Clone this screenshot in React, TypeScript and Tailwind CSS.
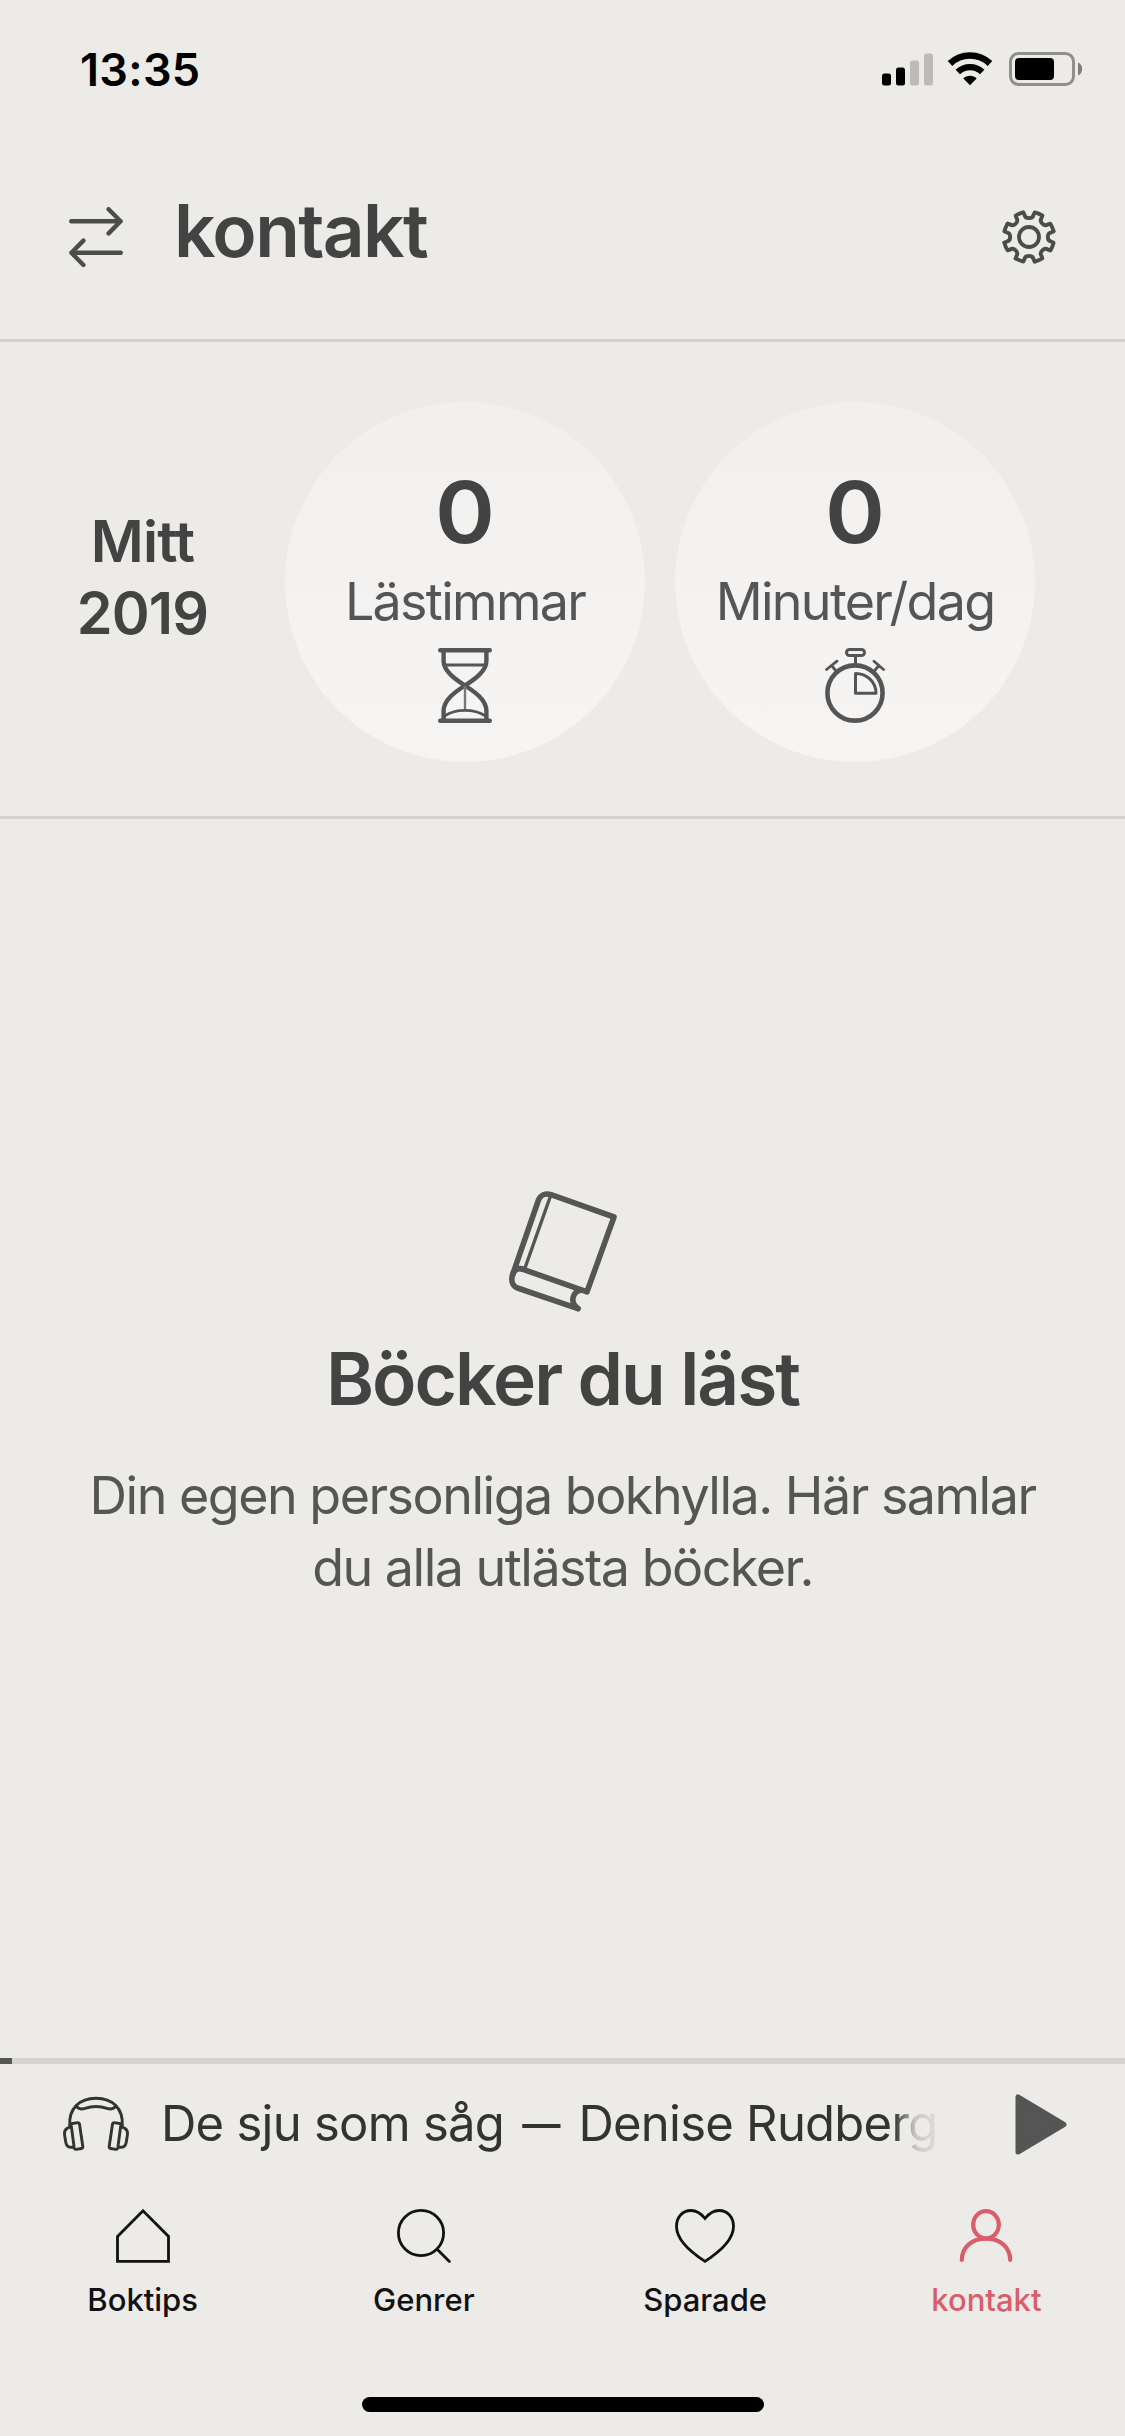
import type { ReactNode } from "react"
import clsx from "clsx"

function StatusBar() {
  return (
    <div className="flex h-[138px] items-center justify-between pl-[80px] pr-[42px]">
      <span className="text-[45px] leading-none font-semibold tracking-[0.3px] text-black">13:35</span>
      <div className="flex items-center">
        <svg width="51" height="33" viewBox="0 0 51 33" className="mr-[14px]">
          <rect x="0" y="20.5" width="9" height="12" rx="2.5" />
          <rect x="14" y="14.5" width="9" height="18" rx="2.5" />
          <rect x="28" y="7.5" width="9" height="25" rx="2.5" fill="#bcbbb9" />
          <rect x="42" y="0.5" width="9" height="32" rx="2.5" fill="#bcbbb9" />
        </svg>
        <svg width="46" height="34" viewBox="0 0 46 34" className="mr-[16px]">
          <path d="M3 11.5a29 29 0 0 1 40 0" fill="none" stroke="#000" strokeWidth="6.6" />
          <path d="M10.8 20a17.8 17.8 0 0 1 24.4 0" fill="none" stroke="#000" strokeWidth="6.4" />
          <path d="M16.3 26.5C19.5 22.8 26.5 22.8 29.7 26.5L23 33.2Z" />
        </svg>
        <svg width="74" height="34" viewBox="0 0 74 34">
          <rect x="1.5" y="1.5" width="63" height="31" rx="8" fill="none" stroke="#908f8d" strokeWidth="3" />
          <rect x="6" y="6" width="39" height="22" rx="4" />
          <path d="M69 10.5c5.5 2 5.5 11 0 13z" fill="#807f7d" />
        </svg>
      </div>
    </div>
  )
}

function SwapIcon() {
  return (
    <svg width="54" height="60" viewBox="0 0 54 60" fill="none" stroke="#4c4c4c" strokeWidth="4.4" strokeLinecap="round" strokeLinejoin="round">
      <path d="M2.2 14.2H51.6M39.6 2.2L51.6 14.2L39.6 26.4" />
      <path d="M51.8 45.8H2.4M14.4 33.6L2.4 45.8L14.4 58" />
    </svg>
  )
}

function GearIcon() {
  return (
    <svg width="54" height="54" viewBox="-27 -27 54 54" fill="none" stroke="#4c4c4c" strokeWidth="3.8" strokeLinejoin="round">
      <circle r="10" />
      {[0, 45, 90, 135, 180, 225, 270, 315].map((angle) => (
        <path
          key={angle}
          transform={`rotate(${angle})`}
          strokeLinecap="round"
          d="M-5.7 -24.6L-4.6 -22.4C-4.2 -20 -2.4 -18.8 0 -18.8C2.4 -18.8 4.2 -20 4.6 -22.4L5.7 -24.6A25.2 25.2 0 0 1 13.36 -21.42"
        />
      ))}
    </svg>
  )
}

function HourglassIcon() {
  return (
    <svg width="54" height="75" viewBox="0 0 54 75" fill="none" stroke="#555" strokeWidth="4.4">
      <path d="M2.2 2.2H51.8M2.2 72.8H51.8" strokeLinecap="round" />
      <path d="M5.6 3V13C5.6 23 17 31 27 37.5C37 44 48.4 52 48.4 63V72" />
      <path d="M48.4 3V13C48.4 23 37 31 27 37.5C17 44 5.6 52 5.6 63V72" />
      <path d="M7 17H47" strokeWidth="2.8" />
      <path d="M27 38V62" strokeWidth="2.4" stroke="#777" />
      <path d="M6.5 68C18 60.5 36 60.5 47.5 68" strokeWidth="2.8" />
    </svg>
  )
}

function StopwatchIcon() {
  return (
    <svg width="60" height="75" viewBox="0 0 60 75" fill="none" stroke="#555" strokeWidth="3">
      <circle cx="30" cy="45" r="27.6" strokeWidth="4.6" />
      <rect x="21.5" y="1.5" width="18" height="6" rx="3" />
      <path d="M30.5 8V16" />
      <path d="M1.5 21.5L12 13.2M7 18L11.5 23.5M58.5 21.5L49 13.2M53.5 18L49 23.5" strokeLinecap="round" strokeWidth="2.8" />
      <path d="M30.5 25.5V45.3H51C51 34 42 25.5 30.5 25.5Z" strokeLinejoin="round" />
    </svg>
  )
}

function BookIcon() {
  return (
    <svg width="108" height="121" viewBox="0 0 108 121" fill="none" stroke="#555" strokeWidth="5.6" strokeLinecap="round" strokeLinejoin="round">
      <path d="M12 77.6L78 100.8L105 26L42 3.6C36.5 1.8 31.5 4 29.5 9L3.5 84C1.8 90 3.5 95 8.5 97L69 117.6" />
      <path d="M3.6 84C5 79 8.5 76.6 13 78" />
      <path d="M72 99C64 100.5 60 111 69 117.6" />
      <path d="M41.5 5L16 77" strokeWidth="3.4" strokeLinecap="butt" />
    </svg>
  )
}

function HeadphonesIcon() {
  const cup = "M8 27.8L15 26.6C16 26.5 16.3 27 16.5 28L19.8 50.5C20 51.8 19.6 52.3 18.5 52.5L13 53.4C12 53.5 11.4 53 11.2 52ZM6.8 31.2C2.5 32.5 1 35 1.6 39L2.8 46.5C3.4 50 5.5 52 10.5 51"
  return (
    <svg width="66" height="56" viewBox="0 0 66 56" fill="none" stroke="#333" strokeWidth="2.9" strokeLinecap="round" strokeLinejoin="round">
      <path d="M6.7 30C5.5 12 17 2.2 33 2.2C49 2.2 60.5 12 59.3 30" />
      <path d="M14 11C16 13.6 19 13.2 22 12.4C29 10 37 10 44 12.4C47 13.2 50 13.6 52 11" />
      <path d={cup} />
      <path d={cup} transform="matrix(-1 0 0 1 66 0)" />
    </svg>
  )
}

interface StatProps {
  value: string
  label: string
  icon: ReactNode
}

function Stat({ value, label, icon }: StatProps) {
  return (
    <div className="flex size-[360px] shrink-0 flex-col items-center rounded-full bg-linear-to-b from-[#f1f0ee] to-[#f6f5f4] pt-[69px]">
      <span className="scale-x-107 text-[85px] leading-[84px] font-semibold text-[#434343]">{value}</span>
      <span className="mt-[11px] mb-[10px] text-[52px] leading-[72px] tracking-[-1.7px] whitespace-nowrap text-[#555]">{label}</span>
      {icon}
    </div>
  )
}

const tabs = [
  {
    label: "Boktips",
    icon: (
      <svg width="54" height="54" viewBox="0 0 54 54" fill="none" stroke="currentColor" strokeWidth="2.8">
        <path d="M1.5 27.4L27 1.8L52.5 27.4V52.4H1.5Z" />
      </svg>
    ),
  },
  {
    label: "Genrer",
    icon: (
      <svg width="54" height="54" viewBox="0 0 54 54" fill="none" stroke="currentColor" strokeWidth="2.8" strokeLinecap="round">
        <circle cx="24" cy="24" r="22.6" />
        <path d="M40.4 40.4L52.4 52.4" />
      </svg>
    ),
  },
  {
    label: "Sparade",
    icon: (
      <svg width="60" height="54" viewBox="0 0 60 54" fill="none" stroke="currentColor" strokeWidth="2.8">
        <path d="M30 9.5C26 4.5 21 1.5 16 1.5C7.5 1.5 1.5 8 1.5 17.5C1.5 30 14 42 30 52.4C46 42 58.5 30 58.5 17.5C58.5 8 52.5 1.5 44 1.5C39 1.5 34 4.5 30 9.5Z" />
      </svg>
    ),
  },
  {
    label: "kontakt",
    active: true,
    icon: (
      <svg width="54" height="54" viewBox="0 0 54 54" fill="none" stroke="currentColor" strokeWidth="4.2" strokeLinecap="round">
        <ellipse cx="27" cy="15.8" rx="12.8" ry="13.6" />
        <path d="M2.8 51C3 38 13 29.6 27 29.6C41 29.6 51 38 51.2 51" />
      </svg>
    ),
  },
]

export default function App() {
  return (
    <div className="flex h-[2436px] w-[1125px] flex-col overflow-hidden bg-[#ecebe7] font-['Inter',sans-serif]">
      <StatusBar />

      <header className="flex h-[204px] items-center border-b-[3px] border-[#d3d2cf] pr-[69px] pb-[3px] pl-[69px]">
        <SwapIcon />
        <h1 className="mb-[13px] ml-[51px] text-[73px] leading-[84px] font-semibold tracking-[-1.6px] text-[#434343]">kontakt</h1>
        <div className="ml-auto">
          <GearIcon />
        </div>
      </header>

      <section className="flex h-[477px] items-center border-b-[3px] border-[#d3d2cf]">
        <h2 className="mb-[4px] w-[285px] text-center text-[57.5px] leading-[72px] font-semibold tracking-[-0.8px] text-[#434343]">
          Mitt
          <br />
          2019
        </h2>
        <div className="mt-[6px] flex gap-[30px]">
          <Stat value="0" label="Lästimmar" icon={<HourglassIcon />} />
          <Stat value="0" label="Minuter/dag" icon={<StopwatchIcon />} />
        </div>
      </section>

      <main className="flex h-[1239px] flex-col items-center pt-[372px] text-center">
        <BookIcon />
        <h2 className="mt-[25px] text-[73px] leading-[84px] font-semibold tracking-[-2px] text-[#434343]">Böcker du läst</h2>
        <p className="mt-[39px] text-[52px] leading-[72px] tracking-[-1.5px] whitespace-nowrap text-[#555]">
          Din egen personliga bokhylla. Här samlar
          <br />
          du alla utlästa böcker.
        </p>
      </main>

      {/* Mini player */}
      <div className="h-[6px] bg-[#d4d3d0]">
        <div className="h-full w-[12px] bg-[#555]" />
      </div>
      <div className="flex h-[120px] items-center pl-[63px]">
        <HeadphonesIcon />
        <div className="mb-[1px] ml-[32px] w-[790px] text-[49px] leading-[72px] tracking-[-0.75px] whitespace-nowrap text-[#333] [mask-image:linear-gradient(to_right,#000_733px,rgba(0,0,0,.2)_754px,rgba(0,0,0,.06)_778px)]">
          De sju som såg <span className="inline-block scale-x-78">—</span> Denise Rudberg
        </div>
        <svg width="52" height="61" viewBox="0 0 52 61" className="ml-[64px]">
          <path d="M3 3V58L49 30.5Z" fill="#555" stroke="#555" strokeWidth="5" strokeLinejoin="round" />
        </svg>
      </div>

      <nav className="ml-[2px] flex w-[1125px] grow pt-[25px]">
        {tabs.map((tab) => (
          <div
            key={tab.label}
            className={clsx("flex flex-1 flex-col items-center", tab.active ? "text-[#da5d69]" : "text-[#111]")}
          >
            {tab.icon}
            <span className="mt-[17px] text-[31px] leading-[40px] font-medium">{tab.label}</span>
          </div>
        ))}
      </nav>

      <div className="mb-[24px] h-[15px] w-[402px] self-center rounded-full bg-black" />
    </div>
  )
}
